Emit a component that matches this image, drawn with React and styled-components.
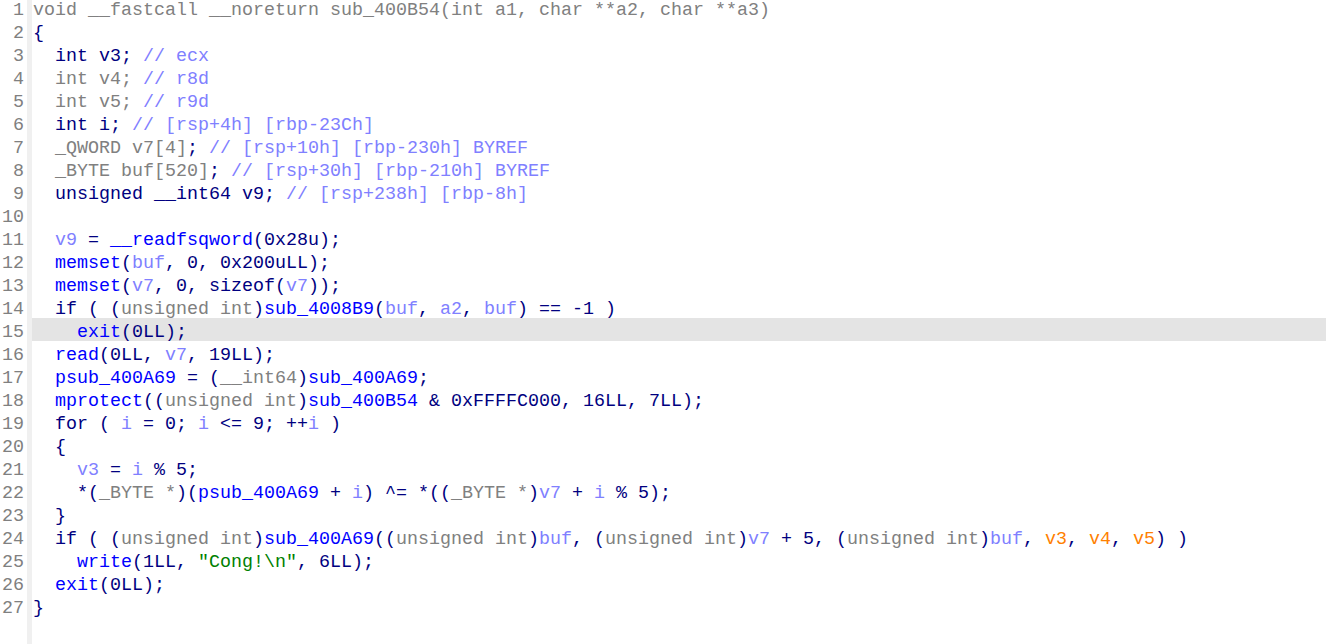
import React from 'react'
import styled, { createGlobalStyle } from 'styled-components'

const Global = createGlobalStyle`
  html, body {
    margin: 0;
    padding: 0;
    background: #ffffff;
    overflow: hidden;
  }
`

const colors = {
  k: '#000080',
  p: '#000080',
  f: '#0000ff',
  v: '#8080ff',
  g: '#808080',
  s: '#008000',
  o: '#ff8000',
  c: '#8080ff',
}

const Editor = styled.div`
  display: flex;
  height: 644px;
  overflow: hidden;
  background: #ffffff;
  font-family: "Liberation Mono", "DejaVu Sans Mono", monospace;
  font-size: 18.33px;
  line-height: 23px;
`

const Gutter = styled.div`
  width: 24px;
  padding-right: 3px;
  margin-top: -4px;
  text-align: right;
  color: #808080;
`

const Divider = styled.div`
  width: 5px;
  background: #f0f0f0;
`

const Code = styled.div`
  flex: 1;
  margin-top: -4px;
`

const Num = styled.div`
  box-sizing: border-box;
  height: 23px;
  padding-top: 3px;
`

const Line = styled.div`
  box-sizing: border-box;
  height: 23px;
  padding: 3px 0 0 1px;
  white-space: pre;
  color: #000080;
  background: ${p => (p.$active ? '#e4e4e4' : 'transparent')};
`

const Tok = styled.span`
  color: ${p => colors[p.$k]};
`

const lines = [
  [['g', 'void __fastcall __noreturn sub_400B54(int a1, char **a2, char **a3)']],
  [['p', '{']],
  [['p', '  '], ['k', 'int'], ['p', ' v3; '], ['c', '// ecx']],
  [['p', '  '], ['g', 'int v4;'], ['c', ' // r8d']],
  [['p', '  '], ['g', 'int v5;'], ['c', ' // r9d']],
  [['p', '  '], ['k', 'int'], ['p', ' i; '], ['c', '// [rsp+4h] [rbp-23Ch]']],
  [['p', '  '], ['g', '_QWORD v7[4]'], ['p', ';'], ['c', ' // [rsp+10h] [rbp-230h] BYREF']],
  [['p', '  '], ['g', '_BYTE buf[520]'], ['p', ';'], ['c', ' // [rsp+30h] [rbp-210h] BYREF']],
  [['p', '  '], ['k', 'unsigned __int64'], ['p', ' v9; '], ['c', '// [rsp+238h] [rbp-8h]']],
  [],
  [['p', '  '], ['v', 'v9'], ['p', ' = '], ['f', '__readfsqword'], ['p', '(0x28u);']],
  [['p', '  '], ['f', 'memset'], ['p', '('], ['v', 'buf'], ['p', ', 0, 0x200uLL);']],
  [['p', '  '], ['f', 'memset'], ['p', '('], ['v', 'v7'], ['p', ', 0, sizeof('], ['v', 'v7'], ['p', '));']],
  [['p', '  '], ['k', 'if'], ['p', ' ( ('], ['g', 'unsigned int'], ['p', ')'], ['f', 'sub_4008B9'], ['p', '('], ['v', 'buf'], ['p', ', '], ['v', 'a2'], ['p', ', '], ['v', 'buf'], ['p', ') == -1 )']],
  [['p', '    '], ['f', 'exit'], ['p', '(0LL);']],
  [['p', '  '], ['f', 'read'], ['p', '(0LL, '], ['v', 'v7'], ['p', ', 19LL);']],
  [['p', '  '], ['f', 'psub_400A69'], ['p', ' = ('], ['g', '__int64'], ['p', ')'], ['f', 'sub_400A69'], ['p', ';']],
  [['p', '  '], ['f', 'mprotect'], ['p', '(('], ['g', 'unsigned int'], ['p', ')'], ['f', 'sub_400B54'], ['p', ' & 0xFFFFC000, 16LL, 7LL);']],
  [['p', '  '], ['k', 'for'], ['p', ' ( '], ['v', 'i'], ['p', ' = 0; '], ['v', 'i'], ['p', ' <= 9; ++'], ['v', 'i'], ['p', ' )']],
  [['p', '  {']],
  [['p', '    '], ['v', 'v3'], ['p', ' = '], ['v', 'i'], ['p', ' % 5;']],
  [['p', '    *('], ['g', '_BYTE *'], ['p', ')('], ['f', 'psub_400A69'], ['p', ' + '], ['v', 'i'], ['p', ') ^= *(('], ['g', '_BYTE *'], ['p', ')'], ['v', 'v7'], ['p', ' + '], ['v', 'i'], ['p', ' % 5);']],
  [['p', '  }']],
  [['p', '  '], ['k', 'if'], ['p', ' ( ('], ['g', 'unsigned int'], ['p', ')'], ['f', 'sub_400A69'], ['p', '(('], ['g', 'unsigned int'], ['p', ')'], ['v', 'buf'], ['p', ', ('], ['g', 'unsigned int'], ['p', ')'], ['v', 'v7'], ['p', ' + 5, ('], ['g', 'unsigned int'], ['p', ')'], ['v', 'buf'], ['p', ', '], ['o', 'v3'], ['p', ', '], ['o', 'v4'], ['p', ', '], ['o', 'v5'], ['p', ') )']],
  [['p', '    '], ['f', 'write'], ['p', '(1LL, '], ['s', '"Cong!\\n"'], ['p', ', 6LL);']],
  [['p', '  '], ['f', 'exit'], ['p', '(0LL);']],
  [['p', '}']],
]

const ACTIVE = 14

function App() {
  return (
    <>
      <Global />
      <Editor>
        <Gutter>
          {lines.map((_, i) => (
            <Num key={i}>{i + 1}</Num>
          ))}
        </Gutter>
        <Divider />
        <Code>
          {lines.map((toks, i) => (
            <Line key={i} $active={i === ACTIVE}>
              {toks.map(([k, t], j) => (
                <Tok key={j} $k={k}>{t}</Tok>
              ))}
            </Line>
          ))}
        </Code>
      </Editor>
    </>
  )
}

export default App
